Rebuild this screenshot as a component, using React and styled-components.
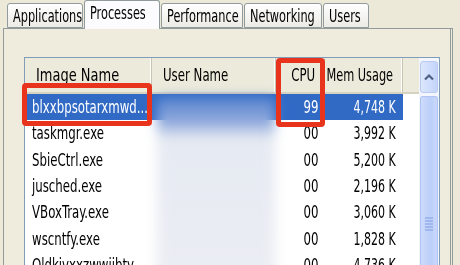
import React from 'react';
import styled, { createGlobalStyle } from 'styled-components';

const GlobalStyle = createGlobalStyle`
  html, body {
    margin: 0;
    padding: 0;
    background: #ece9d8;
    overflow: hidden;
  }
  body {
    font-family: "DejaVu Sans Condensed", "DejaVu Sans", sans-serif;
  }
`;

// the screenshot is stretched tall, so text gets squeezed sideways
const Label = styled.span`
  display: inline-block;
  white-space: nowrap;
  transform: scaleX(${p => p.sx || 0.77});
  transform-origin: ${p => (p.right ? 'right' : 'left')} center;
`;

const Window = styled.div`
  width: 460px;
  height: 265px;
  overflow: hidden;
  background: #ece9d8;
`;

const TabStrip = styled.div`
  display: flex;
  align-items: flex-end;
  height: 28px;
  padding-left: 7px;
  gap: 1px;
`;

const Tab = styled.div`
  height: ${p => (p.active ? 29 : 25)}px;
  width: ${p => p.w}px;
  box-sizing: border-box;
  border: 1px solid #919b9c;
  border-bottom: ${p => (p.active ? 'none' : '1px solid #919b9c')};
  border-radius: 3px 3px 0 0;
  background: ${p => (p.active ? '#fcfcfe' : 'linear-gradient(#ffffff, #ecebe5)')};
  font-size: 17px;
  color: #000;
  display: flex;
  align-items: center;
  padding-left: 5px;
  position: relative;
  z-index: ${p => (p.active ? 2 : 1)};
  margin-bottom: ${p => (p.active ? -1 : 0)}px;
  padding-bottom: ${p => (p.active ? 5 : 0)}px;
`;

const Panel = styled.div`
  margin-left: 3px;
  width: 450px;
  height: 260px;
  box-sizing: border-box;
  border: 1px solid #919b9c;
  border-right: 3px double #919b9c;
  background: #efebdd;
  padding: 28px 0 0 20px;
`;

const ListView = styled.div`
  position: relative;
  width: 416px;
  height: 240px;
  box-sizing: border-box;
  border: 1px solid #7f9db9;
  background: #fff;
  display: grid;
  grid-template-columns: 1fr 20px;
`;

const Body = styled.div`
  display: flex;
  flex-direction: column;
  overflow: hidden;
`;

const COLS = '127px 124px 49px 78px 1fr';

const HeaderRow = styled.div`
  display: grid;
  grid-template-columns: ${COLS};
  height: 36px;
  background: #ebeadb;
  border-bottom: 2px solid #d6d2c2;
  box-sizing: border-box;
`;

const HeaderCell = styled.div`
  display: flex;
  align-items: center;
  justify-content: ${p => (p.right ? 'flex-end' : 'flex-start')};
  padding: 0 ${p => (p.right ? 9 : 0)}px 0 ${p => (p.right ? 0 : 11)}px;
  font-size: 17px;
  color: #000;
  border-right: 1px solid #c7c5b2;
  box-shadow: inset -1px 0 0 #fff;
  &:last-child {
    border-right: none;
    box-shadow: none;
  }
`;

const Row = styled.div`
  display: grid;
  grid-template-columns: ${COLS};
  height: 26.3px;
  flex-shrink: 0;
  background: ${p => (p.selected ? '#316ac5' : '#fff')};
  color: ${p => (p.selected ? '#fff' : '#000')};
  font-size: 17px;
`;

const Cell = styled.div`
  display: flex;
  align-items: center;
  justify-content: ${p => (p.right ? 'flex-end' : 'flex-start')};
  padding: 0 ${p => (p.right ? 7 : 0)}px 0 ${p => (p.right ? 0 : 7)}px;
  overflow: hidden;
`;

const Filler = styled.div`
  background: #fff;
`;

const Scrollbar = styled.div`
  display: flex;
  flex-direction: column;
  background: #f4f6fd;
  padding: 3px 1px 0 1px;
  gap: 3px;
`;

const ArrowButton = styled.div`
  height: 30px;
  border: 1px solid #b9c9ef;
  border-radius: 3px;
  background: linear-gradient(90deg, #dce6fd, #c4d4fb);
  display: flex;
  align-items: center;
  justify-content: center;
`;

const Thumb = styled.div`
  flex: 1;
  border: 1px solid #b0c4f3;
  border-bottom: none;
  border-radius: 3px 3px 0 0;
  background: linear-gradient(90deg, #cddbfc, #bccff9 60%, #c9d7fb);
  display: flex;
  align-items: flex-start;
  justify-content: center;
  padding-top: 120px;
`;

const UserBlur = styled.div`
  position: absolute;
  left: 132px;
  top: 40px;
  width: 118px;
  height: 220px;
  pointer-events: none;
  filter: blur(6px);
  background: linear-gradient(180deg, #5d87d0 0px, #8fa9dc 24px, #e6eaf2 40px, #eceef3 100%);
`;

const RedBox = styled.div`
  position: absolute;
  left: ${p => p.x}px;
  top: ${p => p.y}px;
  width: ${p => p.w}px;
  height: ${p => p.h}px;
  box-sizing: border-box;
  border: 5px solid #e8341c;
  border-radius: 4px;
  pointer-events: none;
`;

const processes = [
  { name: 'blxxbpsotarxmwd...', cpu: '99', mem: '4,748 K' },
  { name: 'taskmgr.exe', cpu: '00', mem: '3,992 K' },
  { name: 'SbieCtrl.exe', cpu: '00', mem: '5,200 K' },
  { name: 'jusched.exe', cpu: '00', mem: '2,196 K' },
  { name: 'VBoxTray.exe', cpu: '00', mem: '3,060 K' },
  { name: 'wscntfy.exe', cpu: '00', mem: '1,828 K' },
  { name: 'Oldkivxxzwwjibty...', cpu: '00', mem: '4,736 K' },
];

const tabs = [
  { label: 'Applications', w: 76 },
  { label: 'Processes', w: 76, active: true },
  { label: 'Performance', w: 82 },
  { label: 'Networking', w: 78 },
  { label: 'Users', w: 46 },
];

export default function App() {
  return (
    <Window>
      <GlobalStyle />
      <TabStrip>
        {tabs.map(t => (
          <Tab key={t.label} w={t.w} active={t.active}>
            <Label sx={0.74}>{t.label}</Label>
          </Tab>
        ))}
      </TabStrip>
      <Panel>
        <ListView>
          <Body>
            <HeaderRow>
              <HeaderCell><Label sx={0.85}>Image Name</Label></HeaderCell>
              <HeaderCell><Label>User Name</Label></HeaderCell>
              <HeaderCell right><Label right>CPU</Label></HeaderCell>
              <HeaderCell right><Label right sx={0.74}>Mem Usage</Label></HeaderCell>
              <HeaderCell />
            </HeaderRow>
            {processes.map((p, i) => (
              <Row key={p.name} selected={i === 0}>
                <Cell><Label>{p.name}</Label></Cell>
                <Cell />
                <Cell right><Label right>{p.cpu}</Label></Cell>
                <Cell right><Label right sx={0.72}>{p.mem}</Label></Cell>
                <Filler />
              </Row>
            ))}
          </Body>
          <Scrollbar>
            <ArrowButton>
              <svg width="10" height="8" viewBox="0 0 10 8">
                <path d="M1 6.5 L5 2.5 L9 6.5" fill="none" stroke="#4d6185" strokeWidth="2.2" />
              </svg>
            </ArrowButton>
            <Thumb>
              <svg width="8" height="14" viewBox="0 0 8 14">
                {[1, 4, 7, 10, 13].map(y => (
                  <path key={y} d={`M0 ${y} H8`} stroke="#8ba6e6" strokeWidth="1.2" />
                ))}
              </svg>
            </Thumb>
          </Scrollbar>
          <UserBlur />
          <RedBox x={-3} y={25} w={130} h={43} />
          <RedBox x={251} y={0} w={49} h={69} />
        </ListView>
      </Panel>
    </Window>
  );
}
